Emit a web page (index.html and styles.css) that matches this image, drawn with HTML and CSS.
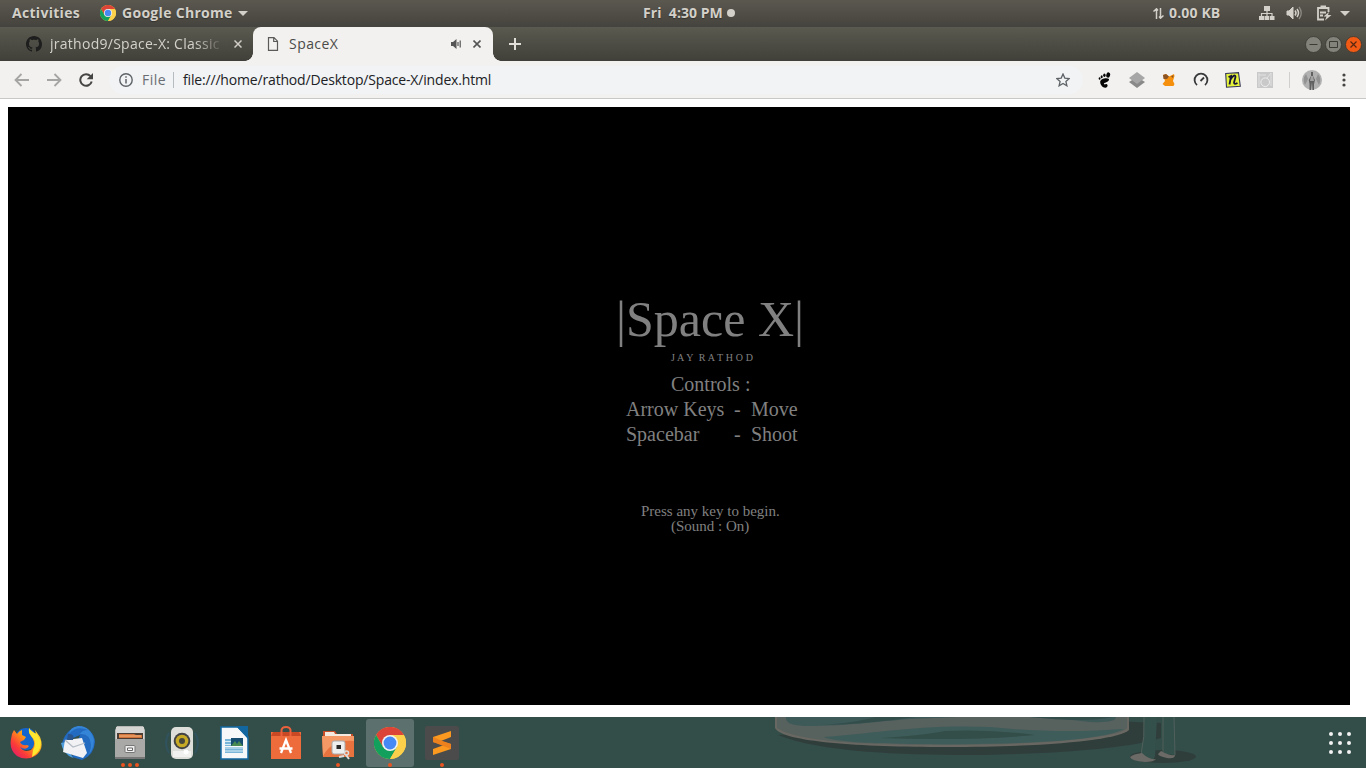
FILE: index.html
```html
<!DOCTYPE html>
<html lang="en">
<head>
<meta charset="utf-8">
<title>SpaceX</title>
<link rel="stylesheet" href="styles.css">
</head>
<body>
<svg class="defs" width="0" height="0" aria-hidden="true">
  <defs>
    <symbol id="chrome" viewBox="0 0 32 32">
      <circle cx="16" cy="16" r="16" fill="#fbc940"/>
      <path d="M2.1 8A16 16 0 0 1 29.9 8H16L9 20Z" fill="#dc4437"/>
      <path d="M2.1 8A16 16 0 0 0 16 32L23 20 16 22 9 20Z" fill="#12a05c"/>
      <path d="M16 8H29.9A16 16 0 0 1 16 32L23 20Z" fill="#fdd04b"/>
      <circle cx="16" cy="16" r="8" fill="#f1f1f1"/>
      <circle cx="16" cy="16" r="6.4" fill="#4688f4"/>
    </symbol>
  </defs>
</svg>
<header class="panel">
  <span class="activities">Activities</span>
  <svg class="app-logo" width="16" height="16"><use href="#chrome"/></svg>
  <span class="app-name">Google Chrome</span>
  <svg class="caret" width="10" height="5"><path d="M0 0H10L5 5Z" fill="#d3d0c9"/></svg>
  <span class="clock">Fri&nbsp; 4:30 PM</span><i class="clock-dot"></i>
  <svg class="net-arrows" width="11" height="11" fill="none" stroke="#d3d0c9" stroke-width="1.5"><path d="M3.500 11V1M.5 3.500 3.500 .8 5 2.500M7.500 0V10M6 8.500 7.500 10.200 10.500 7.500"/></svg>
  <span class="net-rate">0.00 KB</span>
  <svg class="lan" width="16" height="16" fill="#d3d0c9"><path d="M5 1H11V6H5ZM0 11H5V15H0ZM5.5 11H10V15H5.5ZM10.7 11H15.5V15H10.7Z"/><path d="M8 6V11M2.5 11V8.5H13V11" fill="none" stroke="#d3d0c9" stroke-width="1.2"/></svg>
  <svg class="volume" width="17" height="16" fill="none" stroke="#d3d0c9"><path d="M1 6H3L7 2V14L3 10H1Z" fill="#d3d0c9"/><path d="M9 5.5Q11 8 9 10.5M11 4Q14 8 11 12" stroke-width="1.5"/><path d="M13 2Q17.5 8 13 14" stroke="#8c8a83" stroke-width="1.3"/></svg>
  <svg class="battery" width="16" height="16" fill="none" stroke="#d3d0c9" stroke-width="1.8"><path d="M8 14.500H2V3H12.500V7M4.5 1.500H10M4 7.500H10M4 10.5H7"/><path d="M13 7L7.5 11.5H10.5L9 15.5 15.500 10H12Z" fill="#d3d0c9" stroke="none"/></svg>
  <svg class="menu-caret" width="10" height="5"><path d="M0 0H10L5 5Z" fill="#d3d0c9"/></svg>
</header>
<nav class="tabs">
  <div class="tab-back">
    <svg class="github" width="16" height="16" viewBox="0 0 16 16"><path fill="#1d1e1d" d="M8 0C3.58 0 0 3.58 0 8c0 3.54 2.29 6.53 5.47 7.59.4.07.55-.17.55-.38 0-.19-.01-.82-.01-1.49-2.01.37-2.53-.49-2.69-.94-.09-.23-.48-.94-.82-1.13-.28-.15-.68-.52-.01-.53.63-.01 1.08.58 1.23.82.72 1.21 1.87.87 2.33.66.07-.52.28-.87.51-1.07-1.78-.2-3.64-.89-3.64-3.95 0-.87.31-1.59.82-2.15-.08-.2-.36-1.02.08-2.12 0 0 .67-.21 2.2.82.64-.18 1.32-.27 2-.27s1.36.09 2 .27c1.53-1.04 2.2-.82 2.2-.82.44 1.1.16 1.92.08 2.12.51.56.82 1.27.82 2.15 0 3.07-1.87 3.75-3.65 3.95.29.25.54.73.54 1.48 0 1.07-.01 1.93-.01 2.2 0 .21.15.46.55.38A8.01 8.01 0 0 0 16 8c0-4.42-3.58-8-8-8z"/></svg>
    <span class="back-title">jrathod9/Space-X: Classic</span>
    <svg class="close" width="8" height="8"><path d="M.5.5 7.5 7.5M7.5.5.5 7.5" stroke="#cfcdc6" stroke-width="1.5"/></svg>
  </div>
  <div class="tab-front">
    <svg class="doc" width="12" height="14" fill="none" stroke="#5a5a58" stroke-width="1.2"><path d="M1.500 .7H7L10.5 4.2V13.3H1.500ZM6.7 1V4.5H10.3"/></svg>
    <span class="front-title">SpaceX</span>
    <svg class="audio" width="11" height="10"><path d="M0 3H2L5.5 0V10L2 7H0Z" fill="#555"/><path d="M7 3V7M9.2 1.5V8.5" stroke="#555" stroke-width="1.2"/></svg>
    <svg class="close-front" width="8" height="8"><path d="M.5.5 7.5 7.5M7.5.5.5 7.5" stroke="#555" stroke-width="1.6"/></svg>
  </div>
  <svg class="plus" width="12" height="12"><path d="M6 0V12M0 6H12" stroke="#e2dfd8" stroke-width="2"/></svg>
  <div class="window-buttons">
    <svg width="17" height="17"><circle cx="8.5" cy="8.5" r="8" fill="#84837b" stroke="#383832" stroke-width=".8"/><path d="M4.5 8.5H12.5" stroke="#3b3b36"/></svg>
    <svg width="17" height="17"><circle cx="8.5" cy="8.5" r="8" fill="#84837b" stroke="#383832" stroke-width=".8"/><path d="M4.5 5.5H12.500V11.500H4.5Z" fill="none" stroke="#3b3b36"/></svg>
    <svg width="17" height="17"><circle cx="8.5" cy="8.5" r="8" fill="#f05a14" stroke="#383832" stroke-width=".8"/><path d="M5.500 5.500 11.500 11.500M11.500 5.500 5.500 11.500" stroke="#572711" stroke-width="1.2"/></svg>
  </div>
</nav>
<div class="toolbar">
  <svg class="nav-arrow" width="15" height="14" fill="none" stroke="#a5a5a3" stroke-width="1.8"><path d="M15 7H1.5M7.5 1 1.5 7 7.5 13"/></svg>
  <svg class="nav-arrow next" width="15" height="14" fill="none" stroke="#a5a5a3" stroke-width="1.8"><path d="M0 7H13.5M7.5 1 13.5 7 7.5 13"/></svg>
  <svg class="reload" width="15" height="14"><path d="M11.5 3.2A5.8 5.8 0 1 0 12.7 8.5" fill="none" stroke="#454543" stroke-width="2"/><path d="M14 0V6.3H7.7Z" fill="#454543"/></svg>
  <div class="omnibox">
    <svg width="14" height="14"><circle cx="7" cy="7" r="6.2" fill="none" stroke="#5f6368" stroke-width="1.4"/><path d="M7 6V10.5M7 3.3V4.8" stroke="#5f6368" stroke-width="1.5"/></svg>
    <span class="scheme">File</span><i class="divider"></i>
    <span class="url">file:///home/rathod/Desktop/Space-X/index.html</span>
    <svg class="star" width="14" height="14" viewBox="0 0 14 14"><path d="M7 1 8.8 5.1 13.2 5.5 9.9 8.4 10.9 12.8 7 10.5 3.1 12.8 4.1 8.4.8 5.5 5.2 5.1Z" fill="none" stroke="#5f6368" stroke-width="1.3"/></svg>
  </div>
  <div class="extensions">
    <svg width="16" height="16" fill="#050505"><ellipse cx="11.2" cy="3" rx="1.9" ry="2.7" transform="rotate(15 11.2 3)"/><ellipse cx="7.4" cy="3.3" rx="1.2" ry="1.8"/><ellipse cx="4.7" cy="4.7" rx="1" ry="1.5"/><ellipse cx="2.600" cy="6.5" rx=".9" ry="1.3"/><path d="M12 7C10 5.5 3 6.500 3.2 10.3 3.3 13 6 16 8.5 15.7 11 15.3 11.3 12.3 9.3 12 8.3 11.8 8 13 7 12 6 10.6 12.5 10.5 12 7Z"/></svg>
    <svg width="16" height="16"><path d="M0 10 8 5 16 10 8 16Z" fill="#898989"/><path d="M0 6 8 0 16 6 8 12Z" fill="#a6a6a6"/></svg>
    <svg width="16" height="16"><path d="M2 3 5 2 8 4.500 13 2 13.500 4 12 9 13.500 12 12.500 14H4L1.500 12 4 9Z" fill="#f5900f"/><path d="M2 3 5 2 8 4.500 6 7 2.500 7ZM12.500 3 10 4.500 12 6Z" fill="#8c5424"/></svg>
    <svg width="16" height="16" fill="none" stroke="#37383a" stroke-width="1.8"><path d="M4 13A6.4 6.4 0 1 1 12 13M7.5 9 11 5.5"/></svg>
    <svg width="16" height="16"><path d="M.7 1.500 13.500 .7 15.300 14.200 1.5 15.2Z" fill="#e5f43b" stroke="#34365b" stroke-width="1.1"/><path d="M3.500 5 6 4 4.500 12.500M5.500 7.500C8 3 10.500 2.500 10.500 5L9 10.500Q9 13 12.500 11" fill="none" stroke="#171735" stroke-width="1.800"/></svg>
    <svg width="16" height="16"><path d="M0 0H16V16H0Z" fill="#c9c9c9"/><circle cx="8.2" cy="10.200" r="4.300" fill="none" stroke="#eee" stroke-width="1"/><path d="M2 1V15M1.500 3H9M10 6 14 1M14 1V14" stroke="#e1e1e1"/></svg>
  </div>
  <i class="toolbar-divider"></i>
  <svg class="avatar" width="20" height="20"><circle cx="10" cy="10" r="10" fill="#b1b1b1"/><path d="M4 4Q0 9 3 15L6 9ZM16 4Q20 9 17 15L14 9Z" fill="#929292"/><path d="M9 2H11V6L13 10 12 14V20H10.5L10 12 9 20H7.5V14L6.800 10 9 6Z" fill="#606060"/><path d="M9 6H11L12 11H8Z" fill="#a1a1a1"/></svg>
  <svg class="kebab" width="4" height="14" fill="#454543"><circle cx="2" cy="2" r="1.6"/><circle cx="2" cy="7" r="1.6"/><circle cx="2" cy="12" r="1.6"/></svg>
</div>
<main class="viewport">
  <section class="game">
    <h1>|Space X|</h1>
    <p class="author">J A Y&nbsp; R A T H O D</p>
    <div class="controls">
      <p class="controls-title">Controls :</p>
      <p class="control"><span>Arrow Keys</span><span>-</span><span>Move</span></p>
      <p class="control"><span>Spacebar</span><span>-</span><span>Shoot</span></p>
    </div>
    <p class="begin">Press any key to begin.</p>
    <p class="sound">(Sound : On)</p>
  </section>
</main>
<footer class="dock">
  <svg class="wallpaper" width="440" height="51" viewBox="0 0 440 51">
    <path d="M8 18C50 35 130 38 200 38 290 37 360 31 391 21V6L365 5Q300 0 8 18Z" fill="#303e3b"/>
    <path d="M5 0H359V13C350 22 287 30 176 30 90 30 12 25 5 11Z" fill="#696762"/>
    <path d="M7 0V11C24 22 70 28 175 28 270 28 350 21 357 11V0Z" fill="#57615d"/>
    <path d="M16 0H346Q346 6 320 5C260-3 200-1 140 2 100 5 80 9 35 9 20 8 16 6 16 0Z" fill="#3d5958"/>
    <path d="M50 8Q100 7 145 0H105Q85 6 50 8ZM260 0Q315 6 343 0Z" fill="#334d4b"/>
    <path d="M54 20C100 17 150 7 220 10 265 15 315 15 354 12 330 25 230 28 160 27 110 27 64 25 54 20Z" fill="#3e5c5a"/>
    <path d="M110 21Q150 19 175 14 220 12 265 18 200 24 110 21Z" fill="#334d48"/>
    <ellipse cx="393" cy="39.500" rx="33" ry="6.500" fill="#303e3b"/>
    <path d="M374 0H387L385 39 383 44 371 39Q375 20 374 0ZM392 0H405V38L393 37Q395 20 392 0Z" fill="#34504b"/>
    <path d="M374 0Q375 20 371 38M393 0 393 36M404 0 405 38" fill="none" stroke="#50605b"/>
    <path d="M372 36Q379 43 386 42 384 45 375 45 361 44 360 40 363 37 372 36ZM391 34Q399 39 405 38 405 42 397 41 388 39 388 37Z" fill="#6b6a66"/>
  </svg>
  <div class="launchers">
    <div class="launcher"><svg width="36" height="36" viewBox="0 0 36 36"><defs><linearGradient id="fire" x1="1" y1="0" x2="0" y2="1"><stop offset="0" stop-color="#fff33a"/><stop offset=".42" stop-color="#ff9b16"/><stop offset=".7" stop-color="#fa3b39"/><stop offset="1" stop-color="#d9107a"/></linearGradient></defs><circle cx="18" cy="14" r="11" fill="#1565cf"/><path d="M4 9 6 5 9 9Q11 6 14 5L14 10 18 12 16 15 12 17Q14 21 19 20L21 21Q18 26 12 22 16 28 23 25 28 21 25 14L21 8 21 3Q22 5 28 9L27 5 32 12Q37 24 27 31 18 36 9 31 1 25 3 14Z" fill="url(#fire)"/><path d="M21 3Q23 7 29 9L33 17Q33 27 24 32L25 25Q29 18 25 13 20 8 21 3Z" fill="#ffe72f"/></svg></div>
    <div class="launcher"><svg width="36" height="36" viewBox="0 0 36 36"><path d="M2 18Q7 2 20 2 34 4 35 17 34 30 22 35L12 32 20 10Z" fill="#226bc0"/><path d="M9 9Q16 0 28 5 22 5 20 9 30 8 31 20 31 29 24 33 34 27 34 15 30 0 18 1 10 2 9 9Z" fill="#3484d8"/><path d="M1 18Q3 29 13 33L5 17ZM5 17 11 10 10 15Z" fill="#4e9ddd"/><path d="M5 15 22 13 27 28 23 33 3 27Z" fill="#f2f2f4"/><path d="M5 15 13 22 25 18" fill="none" stroke="#b5bcc5" stroke-width="1.2"/><path d="M8 9Q15 8 13 15L7 15Z" fill="#29548c"/></svg></div>
    <div class="launcher"><svg width="36" height="36" viewBox="0 0 36 36"><path d="M5 1H31L33 5V34H3V5Z" fill="#b7b7b5"/><path d="M4 2H32V16H4Z" fill="#d5d5d3"/><path d="M5 8H31V15H5Z" fill="#4b3c34"/><path d="M7 9H22L24 10H30V13H7Z" fill="#d0733a"/><path d="M7 11H29" stroke="#f7ba82"/><path d="M3 14H33V32H3Z" fill="#a9a9a7"/><path d="M3 32H33V34H3Z" fill="#777"/><rect x="13" y="20.500" width="10" height="7" rx="1" fill="#eee" stroke="#777"/><path d="M15.500 23H20.500V25.500H15.500Z" fill="#fff" stroke="#666"/></svg><i class="dots three"></i></div>
    <div class="launcher"><svg width="36" height="36" viewBox="0 0 36 36"><path d="M5 8Q-1 18 5 28M31 8Q37 18 31 28" fill="none" stroke="#30535f" stroke-width="2"/><rect x="7" y="2" width="22" height="32" rx="5" fill="#dededa"/><path d="M9 26H27V32H9Z" fill="#f1f1ef"/><circle cx="18" cy="16" r="8.300" fill="#434343"/><circle cx="18" cy="16" r="6.300" fill="#c6aa26"/><circle cx="18" cy="16" r="3" fill="#48473b"/><circle cx="22" cy="27" r="2.500" fill="#fff"/></svg></div>
    <div class="launcher"><svg width="36" height="36" viewBox="0 0 36 36"><path d="M5 2H22L32 12V34H5Z" fill="#f6f7f8" stroke="#1267a0" stroke-width="1.500"/><path d="M20 1H32V14Z" fill="#1267a0"/><path d="M9 14H27V21H9ZM9 22H27V28H9Z" fill="#79b5d8"/><path d="M9 16.500H16M9 19.500H16M9 23H27M9 26H27" stroke="#d9edf7"/><path d="M15 13H27V21H15Z" fill="#164d70"/><path d="M15 21 19 16 21 19 23 16 27 21Z" fill="#488a51"/></svg></div>
    <div class="launcher"><svg width="36" height="36" viewBox="0 0 36 36"><path d="M3 7H33V34H3Z" fill="#ee6b3b"/><path d="M5 7H31L33 11H3Z" fill="#c94925"/><path d="M13.500 12V5Q14 2 18 2 22 2 22.500 5V12" fill="none" stroke="#eb613b" stroke-width="2"/><path d="M3 11H33V33H3Z" fill="#ee6c3b"/><path d="M13 28 18 15 23 28M11.500 23.500H24.500" fill="none" stroke="#fff" stroke-width="2.300"/></svg></div>
    <div class="launcher"><svg width="36" height="36" viewBox="0 0 36 36"><path d="M3 6H15L17 9H33V16H3Z" fill="#c94e27"/><path d="M5 7H14L15 9H31V13H5Z" fill="#f4e9df"/><path d="M2 11H34V32H3Z" fill="#e8733e"/><path d="M2 11H34V16Q12 14 3 31Z" fill="#f49865"/><rect x="12" y="16" width="13" height="13" rx="2" fill="#eee" stroke="#aaa"/><path d="M16.500 20H21V24H16.500Z" fill="#292929"/><circle cx="26.500" cy="28" r="2" fill="none" stroke="#ddd" stroke-width="1.500"/><path d="M24 31 19 32M26 30 29 34" stroke="#ddd" stroke-width="2"/></svg><i class="dots"></i></div>
    <div class="launcher active"><svg width="32" height="32"><use href="#chrome"/></svg><i class="dots"></i></div>
    <div class="launcher"><svg width="36" height="36" viewBox="0 0 36 36"><rect x="1" y="1" width="34" height="34" rx="2" fill="#4b4b4b"/><path d="M9 12 27 6V12L17 16 27 19V24L9 30V24L20 20 9 17Z" fill="#fa981f"/><path d="M9 12 17 15.500 27 19V24L9 17Z" fill="#ed811d"/></svg><i class="dots"></i></div>
  </div>
  <div class="app-grid"><i></i><i></i><i></i><i></i><i></i><i></i><i></i><i></i><i></i></div>
</footer>
</body>
</html>
```
FILE: styles.css
```css
* { box-sizing: border-box; }
body { margin: 0; width: 1366px; height: 768px; overflow: hidden; display: flex; flex-direction: column; background: #fff; font: 14px "Open Sans", "Noto Sans", sans-serif; white-space: nowrap; }
svg, i { display: block; flex: none; }
span { flex: none; }
p, h1 { margin: 0; font-weight: 400; }
.defs { position: absolute; }
.panel { height: 27px; flex: none; display: flex; align-items: center; background: linear-gradient(#5b5850, #45433d); color: #d3d0c9; font-weight: 700; line-height: 26px; }
.panel > span { height: 27px; text-shadow: 0 1px 1px #33322e; }
.activities { width: 88px; padding-left: 12px; letter-spacing: .3px; }
.app-logo { margin: 0 0 1px 12px; }
.app-name { width: 116px; margin-left: 6px; letter-spacing: .3px; }
.clock { width: 84px; margin-left: 395px; letter-spacing: .05px; }
.clock-dot { width: 8px; height: 8px; margin-bottom: 1px; border-radius: 50%; background: #d3d0c9; }
.net-arrows { margin: 0 0 1px 418px; }
.net-rate { width: 56px; margin-left: 5px; letter-spacing: .15px; }
.lan { margin: 0 0 1px 34px; }
.volume { margin: 0 0 1px 11px; }
.battery { margin: 0 0 1px 13px; }
.menu-caret { margin-left: 8px; }
.tabs { height: 34px; flex: none; display: flex; align-items: center; background: linear-gradient(#5b5a50, #403f39); }
.tab-back { width: 253px; height: 34px; display: flex; align-items: center; padding-left: 26px; color: #d3d1ca; }
.back-title { width: 172px; margin-left: 8px; padding-bottom: 2px; letter-spacing: .27px; overflow: hidden; -webkit-mask-image: linear-gradient(90deg, #000 145px, transparent 174px); mask-image: linear-gradient(90deg, #000 145px, transparent 174px); }
.close { margin-left: 12px; }
.tab-front { position: relative; width: 240px; height: 34px; display: flex; align-items: center; padding-left: 14px; border-radius: 8px 8px 0 0; background: #f2f1ef; color: #4b4b49; }
.tab-front::before, .tab-front::after { content: ""; position: absolute; bottom: 0; width: 8px; height: 8px; }
.tab-front::before { left: -8px; background: radial-gradient(circle at 0 0, transparent 7.5px, #f2f1ef 8px); }
.tab-front::after { right: -8px; background: radial-gradient(circle at 100% 0, transparent 7.5px, #f2f1ef 8px); }
.front-title { width: 60px; margin-left: 10px; padding-bottom: 2px; letter-spacing: .45px; }
.audio { margin-left: 102px; }
.close-front { margin-left: 11px; }
.plus { margin-left: 16px; }
.window-buttons { display: flex; gap: 3px; margin-left: auto; padding-right: 4px; }
.toolbar { height: 38px; flex: none; display: flex; align-items: center; padding-left: 14px; background: #f2f1ef; border-bottom: 1px solid #c8c8c6; }
.next { margin-left: 18px; }
.reload { margin-left: 17px; }
.omnibox { width: 974px; height: 28px; display: flex; align-items: center; margin-left: 15px; padding-left: 10px; border-radius: 14px; background: #f1f3f4; }
.scheme { width: 30px; margin-left: 9px; color: #6a6e73; letter-spacing: .5px; }
.divider { width: 1px; height: 16px; margin-left: 1px; background: #b7bbc0; }
.url { width: 310px; margin-left: 9px; color: #202124; letter-spacing: -.17px; }
.star { margin-left: 563px; }
.extensions { display: flex; gap: 16px; margin-left: 14px; }
.toolbar-divider { width: 1px; height: 16px; margin-left: 16px; background: #cfcfcd; }
.avatar { margin-left: 12px; }
.kebab { margin-left: 20px; }
.viewport { height: 618px; flex: none; padding: 8px 16px 12px 8px; }
.game { height: 598px; display: flex; flex-direction: column; align-items: flex-start; padding: 187px 0 0 608px; background: #000; color: #808080; font-family: "Liberation Serif", serif; }
h1 { font-size: 50px; line-height: 50px; }
.author { margin: 9px 0 0 55px; font-size: 10px; line-height: 10px; letter-spacing: .14px; }
.controls { margin: 9px 0 0 10px; font-size: 20px; line-height: 25px; }
.controls-title { padding-left: 45px; }
.control { display: grid; grid-template-columns: 108px 17px auto; }
.begin { margin: 57px 0 0 25px; font-size: 15px; line-height: 15px; }
.sound { margin-left: 55px; font-size: 15px; line-height: 15px; }
.dock { position: relative; height: 51px; flex: none; display: flex; align-items: center; background: #334d49; }
.wallpaper { position: absolute; left: 770px; top: 0; }
.launchers { display: flex; gap: 4px; padding-left: 2px; }
.launcher { position: relative; width: 48px; height: 48px; display: flex; align-items: center; justify-content: center; border-radius: 3px; }
.launcher.active { background: #5c716e; }
.dots { position: absolute; left: 22px; bottom: 0; width: 4px; height: 4px; border-radius: 50%; background: #e95420; }
.three { box-shadow: -7px 0 #e95420, 7px 0 #e95420; }
.app-grid { position: relative; display: grid; grid-template-columns: repeat(3, 4px); gap: 5px; margin: 0 15px 0 auto; }
.app-grid i { width: 4px; height: 4px; border-radius: 50%; background: #f3f3f3; }
```
